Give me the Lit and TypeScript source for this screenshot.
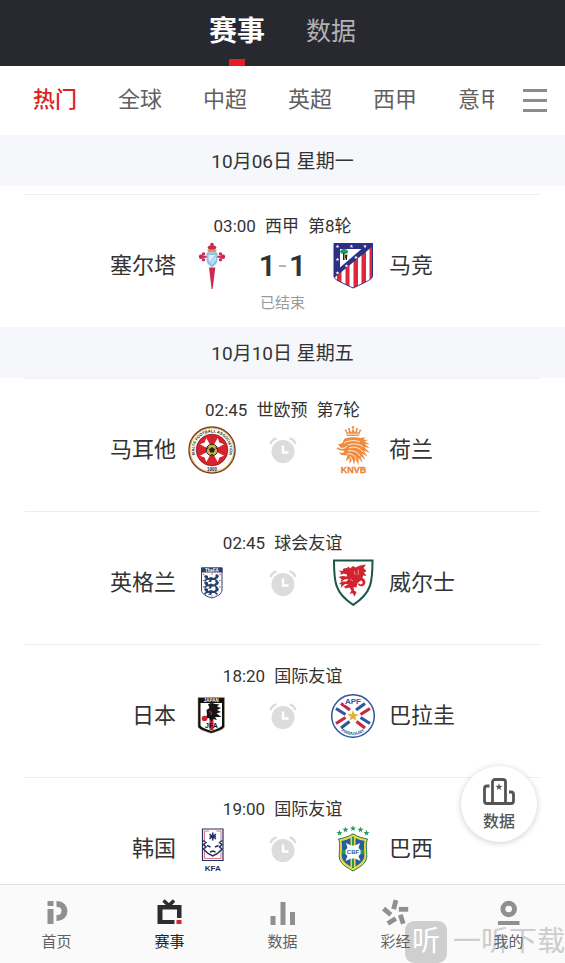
import { LitElement, html, css, svg, nothing, type SVGTemplateResult } from "lit";
import { customElement, property, state } from "lit/decorators.js";
import { classMap } from "lit/directives/class-map.js";

interface Match {
  time: string;
  league: string;
  round?: string;
  home: string;
  away: string;
  homeCrest: string;
  awayCrest: string;
  score?: [number, number];
  status?: string;
}

interface Day {
  label: string;
  spaced?: boolean;
  matches: Match[];
}

const DAYS: Day[] = [
  {
    label: "10月06日 星期一",
    spaced: true,
    matches: [
      { time: "03:00", league: "西甲", round: "第8轮", home: "塞尔塔", away: "马竞", homeCrest: "celta", awayCrest: "atletico", score: [1, 1], status: "已结束" },
    ],
  },
  {
    label: "10月10日 星期五",
    matches: [
      { time: "02:45", league: "世欧预", round: "第7轮", home: "马耳他", away: "荷兰", homeCrest: "malta", awayCrest: "netherlands" },
      { time: "02:45", league: "球会友谊", home: "英格兰", away: "威尔士", homeCrest: "england", awayCrest: "wales" },
      { time: "18:20", league: "国际友谊", home: "日本", away: "巴拉圭", homeCrest: "japan", awayCrest: "paraguay" },
      { time: "19:00", league: "国际友谊", home: "韩国", away: "巴西", homeCrest: "korea", awayCrest: "brazil" },
    ],
  },
];

const STAR = "M0-5 1.2-1.6 4.8-1.5 1.9.6 2.9 4 0 2-2.9 4-1.9.6-4.8-1.5-1.2-1.6Z";
const star = (x: number, y: number, size: number, fill: string) =>
  svg`<path d=${STAR} fill=${fill} transform="translate(${x} ${y}) scale(${size / 5})"/>`;

const lion = (y: number) => svg`
  <path transform="translate(16 ${y})" fill="#27406f"
    d="M0 1 2 0 4 1 4 3 7 2 10 3 12 1 11 0 13-1 15 1 14 3 12 4 14 6 12 7 11 5 8 5 7 7 4 7 6 5 3 5 1 7 0 5 2 4 1 3Z"/>`;

const CRESTS: Record<string, SVGTemplateResult> = {
  celta: svg`
    <g fill="#cf2850">
      <path d="M21 25.500H27.300L24.600 47H23.600Z"/>
      <path d="M22 9 19.500 5.500 21 3.500 22.500 4 22 2 24 .5 26 2 25.500 4 27 3.500 28.500 5.500 26 9Z"/>
      <circle cx="13" cy="14.800" r="2.200"/><circle cx="15.500" cy="12" r="1.700"/><circle cx="15.500" cy="17.800" r="1.700"/>
      <circle cx="35" cy="14.800" r="2.200"/><circle cx="32.500" cy="12" r="1.700"/><circle cx="32.500" cy="17.800" r="1.700"/>
      <path d="M13 13.800H35V15.800H13Z"/>
    </g>
    <path d="M19.500 7.500H28.500L28 10.500H20Z" fill="#d99b5c"/>
    <path d="M18.500 10.500H29.500V17.500C29.500 21.500 27 23.500 24 25.200 21 23.500 18.500 21.500 18.500 17.500Z" fill="#8fc3ea"/>
    <path d="M20.500 13H27.500L21.500 20C20.500 18 20.500 16 20.500 13Z" fill="#dcedf8"/>
    <path d="M22 20.500 28 14V18L24 22.500Z" fill="#bfe0f5"/>`,
  atletico: svg`
    <clipPath id="atm"><path d="M5 1.500H43.500V34.500C43 37 40 38.500 24.200 46 9 39 5.500 37.500 5 34.500Z"/></clipPath>
    <g clip-path="url(#atm)">
      <path d="M0 0H48V48H0Z" fill="#fff"/>
      <path d="M8 20H12.500V48H8ZM16.500 20H20.500V48H16.500ZM24.500 14H29V48H24.500ZM32.500 8H37V48H32.500ZM40.500 0H44V48H40.500Z" fill="#e3263a"/>
      <path d="M4 0H44V4L5 36Z" fill="#2b2f86"/>
    </g>
    <path d="M11 7H32.500L11 25.500Z" fill="#fff"/>
    <path d="M11.500 8.500C13 6.500 17 6.500 18.500 8.500 20 11 17.500 12 15 12 12 12 10.500 10.500 11.500 8.500Z" fill="#1f9c5c"/>
    <path d="M14 11.500H15.500V18H14ZM16 13 18.500 12.500 18 15.500 18 18H16.800L16.200 15.500Z" fill="#222"/>
    ${star(8.5, 4.5, 2, "#fff")}${star(22.5, 4.3, 2, "#fff")}${star(36, 4.3, 2, "#fff")}
    ${star(8.5, 17.5, 2, "#fff")}${star(8.5, 31, 2, "#fff")}${star(17.5, 24, 2, "#fff")}${star(27, 15.5, 2, "#fff")}
    <path d="M5 1.500H43.500V34.500C43 37 40 38.500 24.200 46 9 39 5.500 37.500 5 34.500Z" fill="none" stroke="#2b2f86" stroke-width="1"/>`,
  malta: svg`
    <circle cx="24" cy="24" r="23" fill="#fffdf5" stroke="#7c3a22" stroke-width="1.500"/>
    <circle cx="24" cy="24" r="21.900" fill="none" stroke="#d9a441" stroke-width=".8"/>
    <circle cx="24" cy="24" r="15.800" fill="#d8232f" stroke="#7a1c20" stroke-width=".8"/>
    <path id="malta-top" d="M10.500 35.300A17.600 17.600 0 1 1 37.500 35.300" fill="none"/>
    <text font-family="Liberation Sans" font-size="4" font-weight="700" fill="#2a1c18" text-anchor="middle"><textPath href="#malta-top" startOffset="50%">MALTA FOOTBALL ASSOCIATION</textPath></text>
    <text x="24" y="44.800" text-anchor="middle" font-family="Liberation Sans" font-size="4.500" font-weight="700" fill="#2a1c18">1900</text>
    ${[45, 135, 225, 315].map((a) => svg`<path d="M-2-4-4.500-12.500 0-10.500 4.500-12.500 2-4Z" fill="#fff" transform="translate(24 24) rotate(${a})"/>`)}
    <circle cx="24" cy="24" r="5.800" fill="#c9b44c" stroke="#33291a" stroke-width="1"/>
    <path d="M24 21 27 23.200 25.800 26.500H22.200L21 23.200ZM19 22 20.500 20.500 20 24ZM29 22 27.500 20.500 28 24ZM22.500 29H25.500L24 27.800Z" fill="#2a2415"/>`,
  netherlands: svg`
    <g fill="#f08a3c">
      <path d="M18 10 16.500 4.500 19.500 7 20 3 22.500 6.500 24 1.500 25.500 6.500 28 3 28.500 7 31.500 4.500 30 10Z"/>
      <circle cx="24" cy="1.300" r="1.200"/><circle cx="20" cy="3" r="1.100"/><circle cx="28" cy="3" r="1.100"/><circle cx="16.800" cy="4.500" r="1.100"/><circle cx="31.200" cy="4.500" r="1.100"/>
      <path d="M15 13C18 11 27 10.500 32 12L36 11 34.500 13.500 39 14 35.500 15.500 41 18.500 35.500 18 40.500 22 35 21 41 27 34.500 24.500 38.500 30.500 33 27.500 36.500 34 31.500 30 33.500 37 29.500 32 29.500 39 26.500 33 25 38.500 23.500 33 20.500 38 20.500 32 16.500 35.500 18.500 29.500 12.500 29 10 26.500 14 27 15.500 25 10 24 7 22 12 21.500 9 18.500 13.500 17Z"/>
    </g>
    <g fill="none" stroke="#fff" stroke-width=".9">
      <path d="M18 8.200H30"/>
      <path d="M15 17C20 14 27 14 31 16M19 19C25 17 31 18 34 21M20 22C26 20 31 22 34 26M19 25C24 24 29 26 31 30M18 28C22 27 26 29 27 33M10 22C14 23 17 22 18 20M21 30 23 34"/>
    </g>
    <text x="24.500" y="47" text-anchor="middle" font-family="Liberation Sans" font-size="9" font-weight="700" fill="#ee8434" stroke="#ee8434" stroke-width=".3">KNVB</text>`,
  england: svg`
    <path d="M13.500 9H34V31C34 35 29 37.500 23.800 39 18.500 37.500 13.500 35 13.500 31Z" fill="#fff" stroke="#27406f" stroke-width="1"/>
    <path d="M13 8.500H34.500V13.500H13Z" fill="#27406f"/>
    <text x="23.800" y="12.600" text-anchor="middle" font-family="Liberation Sans" font-size="4.500" font-weight="700" fill="#fff">TheFA</text>
    ${lion(16)}${lion(22.5)}${lion(29)}
    <g fill="#d5545f"><circle cx="15.500" cy="15.500" r=".8"/><circle cx="24" cy="15" r=".8"/><circle cx="32" cy="15.500" r=".8"/><circle cx="15.500" cy="21.500" r=".8"/><circle cx="32" cy="21.500" r=".8"/><circle cx="15.500" cy="28" r=".8"/><circle cx="32" cy="28" r=".8"/><circle cx="23.800" cy="37" r=".8"/></g>`,
  wales: svg`
    <path d="M5 1.500H43.500C43.500 22 43 34 24.200 45.800 5.500 34 5 22 5 1.500Z" fill="#fff" stroke="#1e5548" stroke-width="2"/>
    <path d="M18 9 19.500 7.500 21 9.500 24 7 26.500 8.500 31 6.500 37 5.500 34.500 9 37.500 12 35 13.500 37.500 17 34 16.500 33.500 19C37 20.500 37.500 25.500 34 27 31.500 28 28.500 26.500 29 24L31.500 25.500C34 25.500 34.500 22.500 32 21.500L28.500 24 27.500 28.500 24.500 28 25 31.500 27.500 33 25.500 37.500 23.500 34 20.500 35 22.500 31.500 20.500 28.500 16.500 29.500 15 27.500 19.500 25.500 16 25 11.500 29 12.500 25.500 10 25 13 22.500 17.500 22.500 19.500 20 15.500 20.500 11.500 23 12.500 20 9.500 18 13.500 17 18 17.500 18 15.500 14.500 14.500 11.500 16 12 13.500 9.500 11.500 13.500 12 14.500 9.500Z" fill="#d2232e"/>
    <path d="M25 12 26.500 16M29.500 10.500 29 16M21 20 24 22" stroke="#fff" stroke-width=".5" fill="none"/>`,
  japan: svg`
    <path d="M10 5.500H36.500V34.500C36 37 31 39 23.300 41.300 15.500 39 10.500 37 10 34.500Z" fill="#111" stroke="#b9a57c" stroke-width=".5"/>
    <path d="M12.500 11H34V33.500C33 35.500 29 37 23.300 38.800 17.500 37 13.500 35.500 12.500 33.500Z" fill="#fff"/>
    <text x="23.300" y="9.700" text-anchor="middle" font-family="Liberation Sans" font-size="4.500" font-weight="700" fill="#fff">JAPAN</text>
    <path d="M21.500 11H25.500V38H21.500Z" fill="#d5202c"/>
    <path d="M20 12 24 11.500 31.500 12.500 29 14.500 33 16 29 18 33 20 28.500 21.500 33.500 25 27 25 29 28 25 27 23.500 30 21 26 17 26.500 19 23 18.500 18 21.500 16Z" fill="#151515"/>
    <circle cx="16.500" cy="26.500" r="2.800" fill="#d5202c"/>
    <path d="M21 20C23 19 24 21 23 23" stroke="#d5202c" stroke-width="1.200" fill="none"/>
    <text x="23.500" y="35.500" text-anchor="middle" font-family="Liberation Sans" font-size="7" font-weight="700" fill="#111">JFA</text>`,
  paraguay: svg`
    <circle cx="24" cy="24" r="21.300" fill="#fff" stroke="#31569c" stroke-width="1.500"/>
    <g stroke-width="3.200">
      <path d="M12 11.500 21 18M41 16.500 31.500 22.500M7 31.500 16.500 25.500M36 36 27.500 29.500" stroke="#c9283e"/>
      <path d="M7 16.500 16.500 22.500M36 11.500 27 18M12 36 20.500 29.500M41 31.500 31.500 25.500" stroke="#31569c"/>
    </g>
    ${star(24, 24, 6, "#e0b13a")}
    <text x="24" y="12" text-anchor="middle" font-family="Liberation Sans" font-size="8" font-weight="700" fill="#31569c" stroke="#fff" stroke-width="1.500" paint-order="stroke">APF</text>
    <path id="par-low" d="M10 37A19.200 19.200 0 0 0 38 37" fill="none"/>
    <text font-family="Liberation Sans" font-size="4.500" font-weight="700" fill="#31569c" text-anchor="middle"><textPath href="#par-low" startOffset="50%">PARAGUAY</textPath></text>`,
  korea: svg`
    <path d="M14.500 4H35V35.500H14.500Z" fill="#fff" stroke="#222f5b" stroke-width="1.200"/>
    <path d="M16.500 16V6H21M28.500 6H33V16M16.500 25V33.500H33V25" fill="none" stroke="#dd6479" stroke-width=".9"/>
    <g fill="none" stroke="#222f5b" stroke-width="1.500">
      <path d="M24.800 7.500V15.500M21.500 9 28 14M28 9 21.500 14M21.500 11.500H28"/>
      <path d="M15 15.500 18 17.500 15.500 19.500 18 22 15.500 24 20 28.500 24.800 31 29.500 28.500 34 24 31.500 22 34 19.500 31.500 17.500 34.500 15.500"/>
      <path d="M19 20.500 22.500 22M30.500 20.500 27 22M22 27 24.800 26 27.500 27"/>
    </g>
    <text x="24.800" y="46" text-anchor="middle" font-family="Liberation Sans" font-size="8" font-weight="700" fill="#222f5b">KFA</text>`,
  brazil: svg`
    ${star(10.5, 8, 3.2, "#239a58")}${star(16.5, 4.8, 3.2, "#239a58")}${star(24, 3.5, 3.2, "#239a58")}${star(31.5, 4.8, 3.2, "#239a58")}${star(37.5, 8, 3.2, "#239a58")}
    <path d="M9.500 14C13.500 13.500 20 11.500 24 8.800 28 11.500 34.500 13.500 38.500 14 36.500 18 37.800 25 37.800 32 37 39 30 42.500 24 46 18 42.500 11 39 10.200 32 10.200 25 11.500 18 9.500 14Z" fill="#f0d44a" stroke="#1f7a4b" stroke-width="1"/>
    <path d="M12.500 16C17 15 21 13.500 24 11.500 27 13.500 31 15 35.500 16 34.500 20 35.300 26 35.300 31.500 34.500 37 29 40 24 43 19 40 13.500 37 12.700 31.500 12.700 26 13.500 20 12.500 16Z" fill="#2460a0"/>
    <path d="M21.500 12.500 24 11 26.500 12.500V42L24 43.500 21.500 42Z" fill="#f0d44a"/>
    <path d="M23 11.800H25V43H23ZM12.800 25H35.200V29H12.800Z" fill="#239a58"/>
    <path d="M17 18 22 20.500H26L31 18 29.500 23 31.500 25V29L29.500 31 31.500 36 26 33.500H22L16.500 36 18.500 31 16.500 29V25L18.500 23Z" fill="#fff"/>
    <text x="24" y="29.300" text-anchor="middle" font-family="Liberation Sans" font-size="6" font-weight="700" fill="#2460a0">CBF</text>`,
};

const NAV_ICONS: Record<string, SVGTemplateResult> = {
  home: svg`<path d="M4.500 2H10.500V7H4.500ZM4.500 10H10.500V25H4.500Z" fill="#909090"/>
    <path d="M13.500 5H14.500A7 7 0 0 1 14.500 19H13.500" fill="none" stroke="#909090" stroke-width="6"/>`,
  match: svg`<path d="M1.500 6H25.500V19H21V10.500H6.500V21H18.500V25H1.500Z" fill="#2c2c2e"/>
    <path d="M7.500 1.500 13 6.500 18 1.500" fill="none" stroke="#2c2c2e" stroke-width="3.500"/>
    <path d="M20.500 21H25.500V25H20.500Z" fill="#d22630"/>`,
  data: svg`<path d="M1.500 17H6.500V26H1.500ZM11.500 3H16.500V26H11.500ZM21 13H26V26H21Z" fill="#909090"/>`,
  lottery: svg`<g fill="#909090">
    <rect x="-2.400" y="-4.700" width="4.800" height="9.400" transform="translate(12.800 5.700) rotate(15)"/>
    <rect x="-4.700" y="-2.400" width="9.400" height="4.800" transform="translate(21.500 10.300)"/>
    <rect x="-4.700" y="-2.400" width="9.400" height="4.800" transform="translate(5.200 12.700) rotate(40)"/>
    <rect x="-2.400" y="-4.700" width="4.800" height="9.400" transform="translate(19.800 20.300) rotate(-18)"/>
    <rect x="-4.700" y="-2.400" width="9.400" height="4.800" transform="translate(9.800 22) rotate(-32)"/></g>`,
  me: svg`<circle cx="13.700" cy="10" r="5.800" fill="none" stroke="#909090" stroke-width="5"/>
    <path d="M3 22H24.500V26H3Z" fill="#909090"/>`,
};

const BASE = css`
  * { box-sizing: border-box; }
  button {
    margin: 0;
    padding: 0;
    border: 0;
    background: none;
    color: inherit;
    font: inherit;
    cursor: pointer;
  }
  svg { display: block; }
`;

@customElement("match-row")
export class MatchRow extends LitElement {
  @property({ attribute: false }) match!: Match;

  static styles = [BASE, css`
    :host {
      display: block;
      margin: 0 25px;
      padding: 20px 0 14px;
      border-top: 1px solid #eeeeee;
      color: #333333;
    }
    .info {
      display: flex;
      justify-content: center;
      gap: 9px;
      font-size: 17px;
      line-height: 22px;
    }
    .teams {
      display: grid;
      grid-template-columns: 1fr 48px 93px 48px 1fr;
      align-items: center;
      margin: 5px 0 3px;
    }
    .name { padding: 0 12px; font-size: 22px; line-height: 32px; white-space: nowrap; }
    .home { text-align: right; }
    .middle { display: flex; justify-content: center; align-items: center; gap: 3px; }
    .goals { font-size: 30px; line-height: 32px; font-weight: 600; }
    .dash { width: 7px; height: 2px; background: #b4b4b4; }
    .status {
      height: 20px;
      text-align: center;
      font-size: 15px;
      line-height: 20px;
      color: #9a9a9a;
    }
  `];

  private crest(name: string, team: string) {
    return html`<svg width="48" height="48" viewBox="0 0 48 48" role="img" aria-label=${team}>${CRESTS[name]}</svg>`;
  }

  render() {
    const m = this.match;
    return html`
      <div class="info">
        <time>${m.time}</time><span>${m.league}</span>${m.round ? html`<span>${m.round}</span>` : nothing}
      </div>
      <div class="teams">
        <span class="name home">${m.home}</span>
        ${this.crest(m.homeCrest, m.home)}
        <div class="middle">
          ${m.score
            ? html`<span class="goals">${m.score[0]}</span><span class="dash"></span><span class="goals">${m.score[1]}</span>`
            : html`<svg width="28" height="28" viewBox="0 0 28 28" aria-hidden="true">
                <circle cx="14" cy="15.500" r="11.500" fill="#dcdcdc"/>
                <path d="M1.500 8C2.500 5 4.500 3 7.500 2.500M26.500 8C25.500 5 23.500 3 20.500 2.500" fill="none" stroke="#dcdcdc" stroke-width="2.500"/>
                <path d="M14 9.500V16.500H19.500" fill="none" stroke="#fff" stroke-width="2.400"/>
              </svg>`}
        </div>
        ${this.crest(m.awayCrest, m.away)}
        <span class="name">${m.away}</span>
      </div>
      <div class="status">${m.status ?? nothing}</div>
    `;
  }
}

@customElement("app-root")
export class AppRoot extends LitElement {
  @state() private section = "赛事";
  @state() private league = "热门";
  @state() private page = "赛事";

  static styles = [BASE, css`
    :host {
      display: flex;
      flex-direction: column;
      position: relative;
      height: 100vh;
      overflow: hidden;
      background: #ffffff;
      font-family: Roboto, "Noto Sans CJK SC", sans-serif;
    }
    .top {
      flex: none;
      display: flex;
      justify-content: center;
      gap: 41px;
      height: 66px;
      background: #282830;
    }
    .section {
      position: relative;
      padding-bottom: 8px;
      font-size: 25px;
      color: #b2b2b6;
    }
    .section.active { font-size: 28px; font-weight: 700; color: #ffffff; }
    .section.active::after {
      content: "";
      position: absolute;
      left: 50%;
      bottom: 0;
      width: 16px;
      height: 7px;
      margin-left: -8px;
      background: #ea1c20;
    }
    .leagues {
      flex: none;
      display: flex;
      align-items: center;
      height: 69px;
      padding: 0 18px 0 33px;
    }
    .scroller {
      flex: 1;
      min-width: 0;
      display: flex;
      gap: 41px;
      padding-bottom: 2px;
      overflow-x: auto;
      scrollbar-width: none;
    }
    .league { flex: none; font-size: 22px; line-height: 32px; color: #606060; }
    .league.active { font-weight: 500; color: #dc2323; }
    .menu {
      flex: none;
      display: flex;
      flex-direction: column;
      gap: 7px;
      width: 24px;
      margin-left: 29px;
    }
    .menu span { height: 3px; background: #8c8c8c; }
    .list { flex: 1; min-height: 0; overflow-y: auto; scrollbar-width: none; }
    .date {
      margin: 0;
      padding: 13px 0 11px;
      background: #f5f7fa;
      text-align: center;
      font-size: 19px;
      font-weight: 400;
      line-height: 27px;
      color: #333333;
    }
    .date.spaced { margin-bottom: 8px; }
    .float {
      position: absolute;
      right: 28px;
      bottom: 121px;
      display: flex;
      flex-direction: column;
      align-items: center;
      justify-content: center;
      gap: 6px;
      width: 76px;
      height: 76px;
      padding-top: 2px;
      border-radius: 50%;
      background: #ffffff;
      box-shadow: 0 1px 6px rgba(0, 0, 0, 0.2);
      font-size: 16px;
      font-weight: 500;
      line-height: 20px;
      color: #555555;
    }
    .bottom {
      flex: none;
      position: relative;
      display: grid;
      grid-template-columns: repeat(5, 1fr);
      height: 79px;
      border-top: 1px solid #e2e2e2;
      background: #fafafa;
    }
    .item {
      position: relative;
      display: flex;
      flex-direction: column;
      align-items: center;
      gap: 4px;
      padding-top: 14px;
      font-size: 15px;
      line-height: 22px;
      color: #606060;
    }
    .item.active { color: #222222; }
    .mark {
      position: absolute;
      right: 0;
      bottom: 0;
      display: flex;
      align-items: center;
      gap: 6px;
      font-size: 28px;
      line-height: 42px;
      color: #cdcdcd;
      pointer-events: none;
      white-space: nowrap;
    }
    .badge {
      width: 42px;
      height: 42px;
      border-radius: 9px;
      background: #cfcfcf;
      color: #ffffff;
      text-align: center;
    }
  `];

  render() {
    const leagues = ["热门", "全球", "中超", "英超", "西甲", "意甲"];
    const pages = [["首页", "home"], ["赛事", "match"], ["数据", "data"], ["彩经", "lottery"], ["我的", "me"]];
    return html`
      <header class="top">
        ${["赛事", "数据"].map((s) => html`
          <button class=${classMap({ section: true, active: s === this.section })} @click=${() => (this.section = s)}>${s}</button>`)}
      </header>
      <nav class="leagues">
        <div class="scroller">
          ${leagues.map((l) => html`
            <button class=${classMap({ league: true, active: l === this.league })} @click=${() => (this.league = l)}>${l}</button>`)}
        </div>
        <button class="menu" aria-label="全部赛事"><span></span><span></span><span></span></button>
      </nav>
      <main class="list">
        ${DAYS.map((d) => html`
          <section>
            <h2 class=${classMap({ date: true, spaced: !!d.spaced })}>${d.label}</h2>
            ${d.matches.map((m) => html`<match-row .match=${m}></match-row>`)}
          </section>`)}
      </main>
      <button class="float">
        <svg width="32" height="28" viewBox="0 0 32 28" fill="none" stroke="#555" stroke-width="2.800" aria-hidden="true">
          <path d="M9.500 25.500V4A2.500 2.500 0 0 1 12 1.500H20A2.500 2.500 0 0 1 22.500 4V25.500"/>
          <path d="M6.500 8H4A2.500 2.500 0 0 0 1.500 10.500V23A2.500 2.500 0 0 0 4 25.500H28A2.500 2.500 0 0 0 30.500 23V16.500A2.500 2.500 0 0 0 28 14H26"/>
          <path d=${STAR} fill="#555" stroke="none" transform="translate(16 9) scale(.75)"/>
        </svg>
        <span>数据</span>
      </button>
      <nav class="bottom">
        <div class="mark" aria-hidden="true"><span class="badge">听</span><span>一听下载</span></div>
        ${pages.map(([label, icon]) => html`
          <button class=${classMap({ item: true, active: label === this.page })} @click=${() => (this.page = label)}>
            <svg width="28" height="28" viewBox="0 0 28 28" aria-hidden="true">${NAV_ICONS[icon]}</svg>
            <span>${label}</span>
          </button>`)}
      </nav>
    `;
  }
}
